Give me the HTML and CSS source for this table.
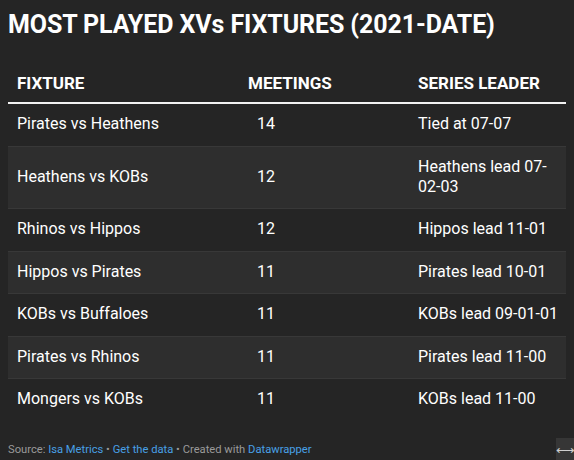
FILE: index.html
```html
<!DOCTYPE html>
<html lang="en">
<head>
    <title>Most played XVs fixtures</title>
    <link rel="stylesheet" href="styles.css">
</head>
<body>
    <h1 class="title">MOST PLAYED XVs FIXTURES (2021-DATE)</h1>
    <table class="fixtures">
        <thead>
            <tr>
                <th class="col-fixture">FIXTURE</th>
                <th class="col-meet">MEETINGS</th>
                <th class="col-lead">SERIES LEADER</th>
            </tr>
        </thead>
        <tbody>
            <tr><td>Pirates vs Heathens</td><td class="num">14</td><td>Tied at 07-07</td></tr>
            <tr class="alt"><td>Heathens vs KOBs</td><td class="num">12</td><td>Heathens lead 07-02-03</td></tr>
            <tr><td>Rhinos vs Hippos</td><td class="num">12</td><td>Hippos lead 11-01</td></tr>
            <tr class="alt"><td>Hippos vs Pirates</td><td class="num">11</td><td>Pirates lead 10-01</td></tr>
            <tr><td>KOBs vs Buffaloes</td><td class="num">11</td><td>KOBs lead 09-01-01</td></tr>
            <tr class="alt"><td>Pirates vs Rhinos</td><td class="num">11</td><td>Pirates lead 11-00</td></tr>
            <tr><td>Mongers vs KOBs</td><td class="num">11</td><td>KOBs lead 11-00</td></tr>
        </tbody>
    </table>
    <!-- footer -->
    <p class="notes">Source: <a href="#">Isa Metrics</a> &bull; <a href="#">Get the data</a> &bull; Created with <a href="#">Datawrapper</a></p>
    <div class="resize">&#10231;</div>
</body>
</html>
```

FILE: styles.css
```css
body, html {
    margin: 0;
    height: 100%;
    background: #252525;
    color: #ffffff;
    font-family: Roboto, "Liberation Sans", sans-serif;
}
body {
    padding: 0 8px;
    box-sizing: border-box;
    position: relative;
    overflow: hidden;
}
.title {
    font-size: 25px;
    font-weight: 700;
    margin: 0;
    padding-top: 11px;
    line-height: 28px;
    letter-spacing: -0.1px;
}
.fixtures {
    width: 558px;
    margin-top: 34px;
    border-collapse: collapse;
    table-layout: fixed;
    font-size: 16px;
}
.fixtures th {
    text-align: left;
    font-size: 17px;
    font-weight: 700;
    padding: 0 9px 9px 9px;
    line-height: 20px;
    border-bottom: 2px solid #f2f2f2;
}
.col-fixture {
    width: 213px;
}
.col-meet {
    width: 152px;
}
.fixtures td {
    padding: 10px 9px 11.5px 9px;
    line-height: 20px;
    border-bottom: 1px solid #383838;
    vertical-align: middle;
}
.fixtures td:last-child {
    padding-right: 4px;
}
.fixtures td.num {
    padding-left: 18px;
}
.fixtures tr:last-child td {
    border-bottom: none;
}
.fixtures tr.alt td {
    background: #2e2e2e;
}
.notes {
    margin: 22px 0 0 0;
    font-size: 11.2px;
    line-height: 14px;
    color: #9a9a9a;
}
.notes a {
    color: #48a0e6;
    text-decoration: none;
}
.resize {
    position: absolute;
    right: 0;
    bottom: 0;
    width: 18px;
    height: 22px;
    background: #363636;
    color: #cfcfcf;
    font-size: 13px;
    line-height: 26px;
    text-align: right;
}
```
